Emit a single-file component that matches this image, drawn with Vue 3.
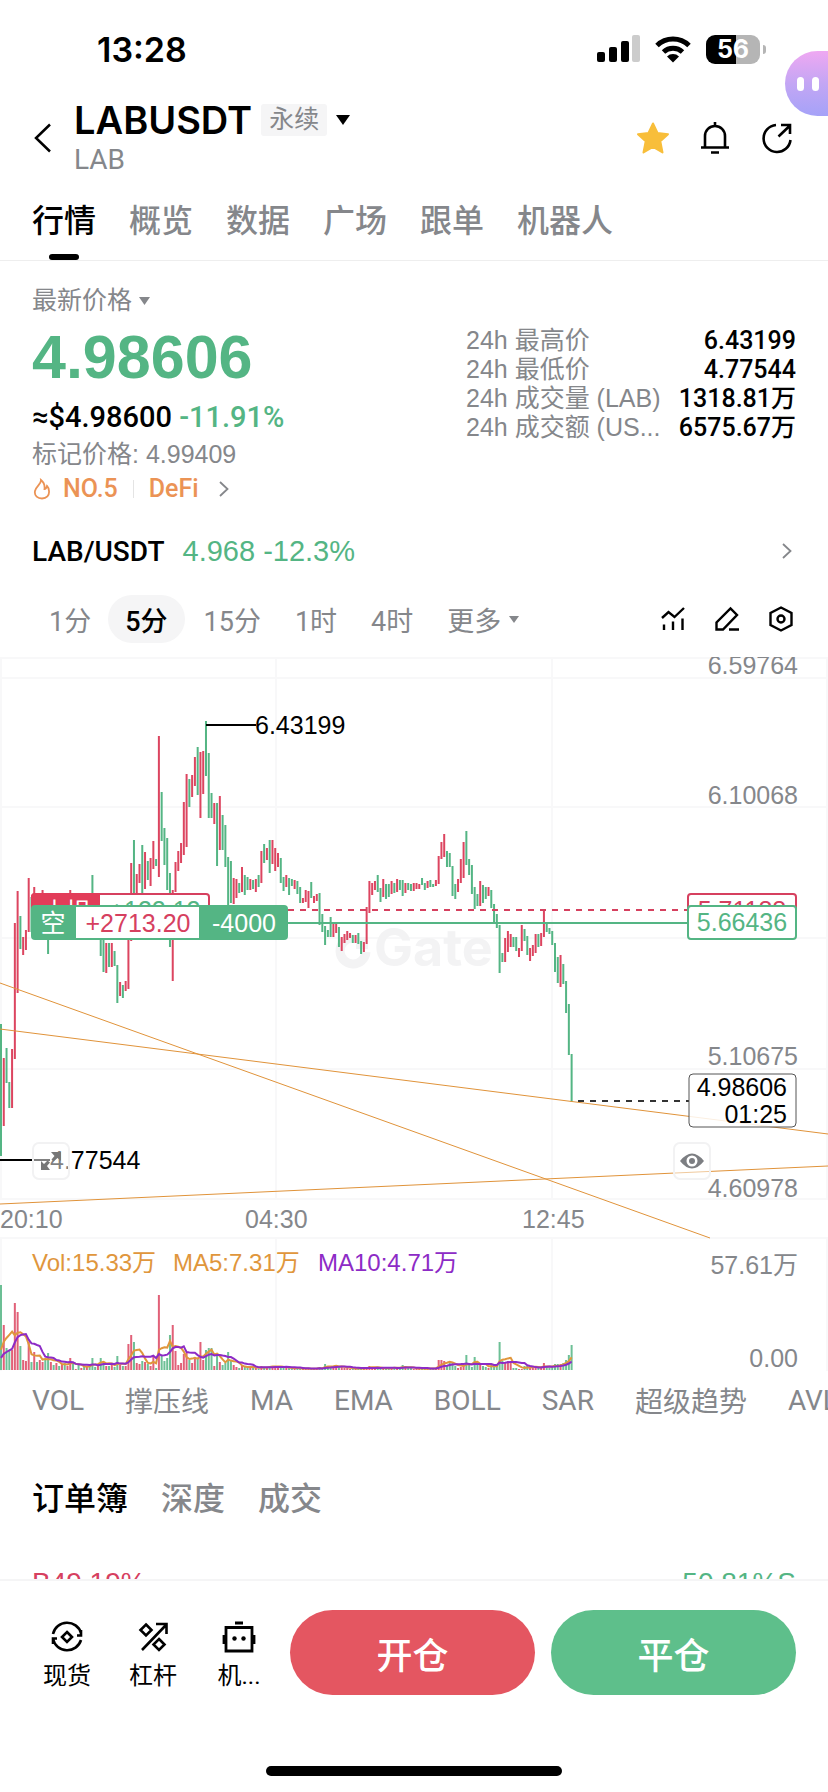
<template>
  <div class="app">
    <!-- 状态栏 -->
    <div class="status-bar">
      <span class="clock">13:28</span>
      <div class="status-icons">
        <svg width="43" height="28" viewBox="0 0 43 28">
          <rect x="0" y="17" width="8" height="10" rx="2" />
          <rect x="12" y="12" width="8" height="15" rx="2" />
          <rect x="24" y="6" width="8" height="21" rx="2" />
          <rect x="35" y="0" width="8" height="27" rx="2" fill="#ccc" />
        </svg>
        <svg width="38" height="28" viewBox="0 0 38 28">
          <path d="M3 10.5 A23 23 0 0 1 35 10.5" fill="none" stroke="#000" stroke-width="5" />
          <path d="M9.5 17 A14 14 0 0 1 28.5 17" fill="none" stroke="#000" stroke-width="5" />
          <path d="M19 27.5 L13 21.5 A8.5 8.5 0 0 1 25 21.5 Z" />
        </svg>
        <span class="battery">56</span>
      </div>
    </div>
    <button class="assistant" aria-label="助手"><i></i><i></i></button>

    <!-- 顶部标题 -->
    <header class="header">
      <button class="back" aria-label="返回">
        <svg width="18" height="30" viewBox="0 0 18 30"><path d="M16 1.5 L2 15 L16 28.5" fill="none" stroke="#000" stroke-width="2.5" /></svg>
      </button>
      <div class="symbol">
        <div class="symbol-line">
          <h1>LABUSDT</h1>
          <span class="badge">永续</span>
          <svg width="14" height="10" viewBox="0 0 14 10"><path d="M0 0 H14 L7 10 Z" /></svg>
        </div>
        <div class="base">LAB</div>
      </div>
      <div class="header-actions">
        <button aria-label="收藏">
          <svg width="34" height="34" viewBox="0 0 34 34"><path fill="#f8be3a" stroke="#f8be3a" stroke-width="2" stroke-linejoin="round" d="M17 2.5 L21.5 12 L32 13.2 L24.3 20.3 L26.5 31.5 L17 26 L7.5 31.5 L9.7 20.3 L2 13.2 L12.5 12 Z" /></svg>
        </button>
        <button aria-label="提醒">
          <svg width="34" height="34" viewBox="0 0 34 34" fill="none" stroke="#000" stroke-width="2.6"><path d="M7 26 V15 A10 10 0 0 1 27 15 V26 M3 26.5 H31 M17 5 V1 M13 31.5 H21" /></svg>
        </button>
        <button aria-label="分享">
          <svg width="34" height="34" viewBox="0 0 34 34" fill="none" stroke="#000" stroke-width="2.6"><path d="M16 4 A13.5 13.5 0 1 0 30.5 19 M18.5 15.5 L29.5 5 M21 4 H30 V13" /></svg>
        </button>
      </div>
    </header>

    <nav class="tabs">
      <a v-for="(tab, i) in tabs" :key="tab" href="#" :class="{ active: i === 0 }">{{ tab }}</a>
    </nav>

    <main class="content">
      <!-- 价格 -->
      <section class="price">
        <div class="price-left">
          <div class="price-label">
            最新价格
            <svg width="11" height="8" viewBox="0 0 11 8"><path fill="#85878b" d="M0 0 H11 L5.5 8 Z" /></svg>
          </div>
          <div class="last-price">4.98606</div>
          <div class="fiat">≈$4.98600 <span class="down">-11.91%</span></div>
          <div class="mark">标记价格: 4.99409</div>
          <div class="rank">
            <svg width="20" height="22" viewBox="0 0 20 22" fill="none" stroke="#eb9355" stroke-width="1.8"><path d="M9 2 C9.5 6 4 8 3 13 C2 18 6 20.5 10 20.5 C14.5 20.5 17.5 17.5 17 13 C16.8 10.5 16 9 15 8 C14.5 10 13.5 11 12.5 11 C13 7 11.5 4 9 2 Z" /></svg>
            <span>NO.5</span>
            <i class="divider"></i>
            <span>DeFi</span>
            <svg class="rank-arrow" width="10" height="16" viewBox="0 0 10 16"><path d="M1 1 L8.5 8 L1 15" fill="none" stroke="#85878b" stroke-width="1.8" /></svg>
          </div>
        </div>
        <dl class="stats">
          <div v-for="s in stats" :key="s.label">
            <dt>{{ s.label }}</dt>
            <dd>{{ s.value }}</dd>
          </div>
        </dl>
      </section>

      <a href="#" class="spot">
        <span class="spot-name">LAB/USDT</span>
        <span class="down">4.968 -12.3%</span>
        <svg width="10" height="16" viewBox="0 0 10 16"><path d="M1 1 L8.5 8 L1 15" fill="none" stroke="#85878b" stroke-width="1.8" /></svg>
      </a>

      <!-- 周期 -->
      <div class="intervals">
        <button v-for="(t, i) in intervals" :key="t" :class="{ active: i === 1 }">{{ t }}</button>
        <button class="more">
          更多
          <svg width="10" height="7" viewBox="0 0 10 7"><path fill="#85878b" d="M0 0 H10 L5 7 Z" /></svg>
        </button>
        <div class="tools">
          <button aria-label="指标">
            <svg width="26" height="26" viewBox="0 0 26 26" fill="none" stroke="#000" stroke-width="2.4"><path d="M2 12 L8.5 6 L14.5 11 L24 2 M4 18.5 V24 M13 15.5 V24 M22.5 12.5 V24" /></svg>
          </button>
          <button aria-label="画线">
            <svg width="26" height="26" viewBox="0 0 26 26" fill="none" stroke="#000" stroke-width="2.4"><path d="M2.5 23.5 V16.5 L16.5 2.5 L23 9 L9 23.5 Z M15 23.5 H25" /></svg>
          </button>
          <button aria-label="设置">
            <svg width="26" height="26" viewBox="0 0 26 26" fill="none" stroke="#000" stroke-width="2.4"><path d="M13 1.5 L23.5 7 V19 L13 24.5 L2.5 19 V7 Z" /><circle cx="13" cy="13" r="3.5" /></svg>
          </button>
        </div>
      </div>

      <!-- K线图 -->
      <div class="chart">
        <svg viewBox="0 0 828 714">
          <g stroke="#f8f8f9" stroke-width="2">
            <path d="M0 1 H828 M0 21 H828 M0 150 H828 M0 281 H828 M0 412 H828 M0 542 H828 M0 581 H828" />
            <path d="M1 0 V542 M276 0 V542 M552 0 V542 M827 0 V542 M1 581 V714 M276 581 V714 M552 581 V714 M827 581 V714" />
          </g>

          <!-- 水印 -->
          <path d="M352 281 A13 13 0 1 0 366 295" fill="none" stroke="#f3f3f4" stroke-width="9" />
          <rect x="356" y="280" width="12" height="12" fill="#f3f3f4" />
          <text x="374" y="309" class="watermark">Gate</text>

          <rect
            v-for="(c, i) in candles" :key="'c' + i"
            :x="barX(i) - 1" :y="c.top" width="2" :height="c.bottom - c.top" :fill="c.color"
          />

          <g class="axis" text-anchor="end">
            <text x="798" y="17">6.59764</text>
            <text x="798" y="147">6.10068</text>
            <text x="798" y="408">5.10675</text>
            <text x="798" y="540">4.60978</text>
            <text x="798" y="617">57.61万</text>
            <text x="798" y="710">0.00</text>
          </g>
          <g class="axis">
            <text x="0" y="571">20:10</text>
            <text x="245" y="571">04:30</text>
            <text x="522" y="571">12:45</text>
          </g>

          <g fill="none" stroke="#e0933a" stroke-width="1">
            <path d="M0 326 L710 581" />
            <path d="M0 372 L828 477" />
            <path d="M0 547 L828 509" />
          </g>

          <path d="M206 68 H256 M0 503 H50" stroke="#000" stroke-width="2" />
          <text x="255" y="77" class="extreme">6.43199</text>
          <text x="50" y="512" class="extreme">4.77544</text>

          <path d="M288 253 H688" stroke="#d6405f" stroke-width="2" stroke-dasharray="6 6" />
          <path d="M288 266 H688" stroke="#54b584" stroke-width="2" />
          <path d="M578 444 H689" stroke="#333" stroke-width="2" stroke-dasharray="6 6" />

          <!-- 止损 -->
          <rect x="32" y="237" width="177" height="34" rx="3" fill="#fff" stroke="#d6405f" stroke-width="2" />
          <path d="M31 240 a4 4 0 0 1 4 -4 H100 V271 H31 Z" fill="#e23c59" />
          <text x="66" y="264" fill="#fff" text-anchor="middle">止损</text>
          <text x="155" y="262" fill="#54b584" text-anchor="middle">+122.12</text>
          <rect x="688" y="237" width="108" height="34" rx="3" fill="#fff" stroke="#d6405f" stroke-width="2" />
          <text x="742" y="262" fill="#d6405f" text-anchor="middle">5.71188</text>

          <!-- 持仓 -->
          <rect x="31" y="248" width="257" height="35" rx="4" fill="#54b584" />
          <rect x="76" y="250" width="123" height="31" fill="#fff" />
          <text x="53" y="275" fill="#fff" text-anchor="middle">空</text>
          <text x="138" y="275" fill="#d6405f" text-anchor="middle">+2713.20</text>
          <text x="244" y="275" fill="#fff" text-anchor="middle">-4000</text>
          <rect x="688" y="249" width="108" height="33" rx="3" fill="#fff" stroke="#54b584" stroke-width="2" />
          <text x="742" y="274" fill="#54b584" text-anchor="middle">5.66436</text>

          <rect x="689" y="417" width="107" height="53" rx="4" fill="#fff" fill-opacity="0.85" stroke="#555" />
          <text x="787" y="439" text-anchor="end">4.98606</text>
          <text x="787" y="466" text-anchor="end">01:25</text>

          <!-- 成交量 -->
          <g class="legend">
            <text x="32" y="614" fill="#e0963c">Vol:15.33万</text>
            <text x="173" y="614" fill="#e0963c">MA5:7.31万</text>
            <text x="318" y="614" fill="#8d2bc6">MA10:4.71万</text>
          </g>
          <rect
            v-for="(v, i) in volumes" :key="'v' + i"
            :x="barX(i) - 1" :y="713 - v" width="2" :height="v" :fill="candles[i].color" fill-opacity="0.85"
          />
          <polyline :points="maLine(5)" fill="none" stroke="#e0963c" stroke-width="2" />
          <polyline :points="maLine(10)" fill="none" stroke="#8d2bc6" stroke-width="2" />
        </svg>

        <button class="chart-btn expand" aria-label="全屏">
          <svg width="20" height="18" viewBox="0 0 20 18"><path fill="#777" d="M10 0 H20 V9 L16.5 6 L12.5 9.5 L10.5 7.5 L13.5 4 Z M9 18 H0 V9 L3 12 L6.5 8.5 L9 10.5 L6 14 Z" /></svg>
        </button>
        <button class="chart-btn eye" aria-label="显示">
          <svg width="24" height="18" viewBox="0 0 24 18"><path fill="#7c7e82" fill-rule="evenodd" d="M0 9 Q12 -6 24 9 Q12 24 0 9 Z M12 3.5 A5.5 5.5 0 1 0 12 14.5 A5.5 5.5 0 1 0 12 3.5 Z" /><circle cx="12" cy="9" r="3" fill="#7c7e82" /></svg>
        </button>
      </div>

      <div class="indicators">
        <button v-for="n in indicators" :key="n">{{ n }}</button>
      </div>

      <div class="book-tabs">
        <button class="active">订单簿</button>
        <button>深度</button>
        <button>成交</button>
      </div>
      <div class="ratio">
        <span class="up">B49.19%</span>
        <span class="down">50.81%S</span>
      </div>
    </main>

    <!-- 底部操作栏 -->
    <footer class="footer">
      <div class="actions">
        <a href="#" class="action">
          <svg width="34" height="34" viewBox="0 0 34 34" fill="none" stroke="#000" stroke-width="2.6"><path d="M3 14 A14.5 14.5 0 0 1 31 13 M31 20 A14.5 14.5 0 0 1 3 19 M3 24 V18.5 H7 M31 10 V15.5 H27 M17 12 L22 17 L17 22 L12 17 Z" /></svg>
          <span>现货</span>
        </a>
        <a href="#" class="action">
          <svg width="34" height="34" viewBox="0 0 34 34" fill="none" stroke="#000" stroke-width="2.6"><path d="M6 30 L30 5 M20 4 H30.5 V14 M10 4.500 L15.500 10 L10 15.500 L4.500 10 Z M23 19 L28.500 24.500 L23 30 L17.500 24.500 Z" /></svg>
          <span>杠杆</span>
        </a>
        <a href="#" class="action">
          <svg width="34" height="34" viewBox="0 0 34 34" fill="none" stroke="#000" stroke-width="2.8"><path d="M4 7.5 H30 V31 H4 Z M13 3 H21 M2 15 V24 M32 15 V24" /><circle cx="12.5" cy="18.5" r="2.2" fill="#000" stroke="none" /><circle cx="21.5" cy="18.5" r="2.2" fill="#000" stroke="none" /></svg>
          <span>机...</span>
        </a>
        <button class="trade open">开仓</button>
        <button class="trade close">平仓</button>
      </div>
      <div class="home-indicator"></div>
    </footer>
  </div>
</template>

<script setup>
const tabs = ['行情', '概览', '数据', '广场', '跟单', '机器人'];
const intervals = ['1分', '5分', '15分', '1时', '4时'];
const indicators = ['VOL', '撑压线', 'MA', 'EMA', 'BOLL', 'SAR', '超级趋势', 'AVL'];
const stats = [
  { label: '24h 最高价', value: '6.43199' },
  { label: '24h 最低价', value: '4.77544' },
  { label: '24h 成交量 (LAB)', value: '1318.81万' },
  { label: '24h 成交额 (US...', value: '6575.67万' }
];

// r = 涨, g = 跌，后面是最高/最低的 y 坐标
const candles = `
g367-499 r401-469 g391-426 g425-451 r392-451 r266-402 r234-336 g259-292 r280-298 r273-293
r221-275 g240-275 r230-274 g240-276 r240-280 r233-274 g240-274 g246-297 r242-278 g245-280
r242-276 g240-278 r240-275 g243-279 r241-277 r233-275 g244-276 r245-275 g243-278 r244-274
g240-276 r243-279 g242-276 g218-270 g246-278 r250-280 g252-299 g274-315 r286-316 g286-310
r286-310 g294-309 g308-346 r325-339 g328-341 r324-334 r240-332 r206-284 g183-239 r217-237
r207-226 g188-236 r195-232 g204-223 r201-229 r184-212 g202-209 r79-220 g135-184 g171-208
g181-233 g216-290 r233-324 r205-235 r194-214 r186-206 r145-198 r117-190 g122-150 r118-140
r100-129 g90-138 r95-161 r94-137 g64-119 g96-161 g136-161 r146-167 g146-209 r139-193
g158-193 g168-210 g200-254 g204-246 r221-247 r222-241 g226-236 r210-235 g218-238 g220-233
r222-233 g223-232 r222-235 g218-230 r194-226 g187-206 r191-203 g183-216 r183-207 r191-214
r196-210 g201-226 g220-234 r218-230 g221-238 g222-229 r223-232 g224-237 g230-246 r241-246
r233-245 r234-251 g225-241 r239-246 r237-244 g236-268 g257-275 g269-288 g273-280 g260-280
r266-280 r267-276 g270-290 r280-294 r277-286 r274-283 r276-281 g278-286 r278-286 g276-287
g284-297 r285-295 r250-287 r224-256 r226-238 r224-233 g218-235 g231-245 r222-240 g227-242
g227-240 r224-237 g226-236 r222-235 g223-233 g223-239 r226-236 g226-233 g227-234 r226-234
r226-232 r227-232 g221-228 g226-233 r224-231 g223-230 g227-230 r223-229 r199-227 r185-202
r177-200 g194-210 g196-210 g209-239 g227-242 r222-235 r202-226 r185-221 g174-208 g202-218
g208-237 g230-252 g237-249 r224-249 g228-246 g230-242 r230-239 g233-251 g247-267 g257-271
g268-316 g296-305 r281-305 r274-295 r277-290 g280-290 g280-294 r291-300 r268-294 g272-284
g279-298 r291-304 r288-299 r277-296 g277-290 r276-289 r253-280 g266-275 g271-277 g274-288
g286-315 g300-326 r298-330 g307-327 g324-356 g347-398 g397-445`
  .trim()
  .split(/\s+/)
  .map((s) => {
    const [top, bottom] = s.slice(1).split('-').map(Number);
    return { color: s[0] === 'r' ? '#dc4560' : '#54b584', top, bottom };
  });

const volumes = [
  85, 45, 22, 20, 20, 67, 58, 24, 10, 9, 28, 8, 18, 8, 10, 8, 11, 17, 8, 5,
  7, 4, 6, 7, 4, 12, 7, 1, 5, 2, 4, 4, 4, 12, 3, 6, 12, 8, 4, 4,
  5, 3, 14, 5, 4, 4, 26, 35, 28, 7, 6, 9, 8, 6, 4, 14, 2, 75, 14, 9,
  12, 35, 45, 19, 5, 7, 16, 17, 10, 7, 11, 12, 28, 10, 20, 22, 22, 4, 14, 8,
  5, 7, 18, 9, 5, 3, 2, 4, 3, 3, 3, 2, 2, 1, 4, 3, 3, 4, 3, 4,
  4, 3, 2, 2, 2, 1, 3, 2, 1, 1, 1, 2, 1, 1, 2, 3, 2, 6, 4, 3,
  4, 4, 3, 3, 2, 2, 1, 2, 1, 1, 2, 2, 3, 4, 3, 2, 2, 1, 2, 2,
  2, 2, 3, 2, 2, 5, 3, 2, 2, 1, 1, 2, 1, 1, 1, 2, 2, 2, 10, 10,
  9, 5, 7, 7, 4, 2, 3, 4, 15, 5, 3, 13, 5, 5, 4, 3, 2, 5, 5, 4,
  28, 9, 8, 9, 7, 2, 2, 1, 1, 4, 4, 3, 3, 2, 3, 3, 7, 3, 2, 3,
  6, 6, 6, 7, 10, 15, 25
];

const barX = (i) => 1 + i * 2.77;

// 均线，起点之前的成交量按 4 补齐
const maLine = (n) =>
  volumes
    .map((_, i) => {
      let sum = 0;
      for (let k = i - n + 1; k <= i; k++) sum += k < 0 ? 4 : volumes[k];
      return `${barX(i).toFixed(1)},${(713 - sum / n).toFixed(1)}`;
    })
    .join(' ');
</script>

<style>
body { margin: 0; background: #fff; }
</style>

<style scoped>
.app {
  position: relative;
  display: flex; flex-direction: column;
  height: 100vh;
  overflow: hidden;
  color: #000;
  background: #fff;
  font-family: Roboto, "Noto Sans CJK SC", sans-serif;
}
button { padding: 0; border: none; background: none; font: inherit; color: inherit; cursor: pointer; }
a { color: inherit; text-decoration: none; }
svg { display: block; flex-shrink: 0; }
.up   { color: #d6405f; }
.down { color: #54b584; }

/* ───────── 状态栏 ───────── */
.status-bar {
  display: flex; justify-content: space-between; align-items: center;
  height: 98px;
  padding: 0 62px 0 97px;
  box-sizing: border-box;
}
.clock { font: 600 34px Inter, sans-serif; }
.status-icons { display: flex; align-items: center; gap: 14px; }
.battery {
  position: relative;
  width: 54px; height: 29px;
  margin-right: 6px;
  border-radius: 9px;
  background: linear-gradient(90deg, #000 56%, #b5b5b5 56%);
  color: #fff;
  font: 700 25px/29px Inter, sans-serif;
  text-align: center;
}
.battery::after {
  content: "";
  position: absolute; right: -6px; top: 10px;
  width: 3px; height: 9px;
  border-radius: 0 3px 3px 0;
  background: #b5b5b5;
}
.assistant {
  position: absolute; right: 0; top: 51px;
  display: flex; align-items: center; gap: 8px;
  width: 43px; height: 65px;
  padding-left: 12px;
  border-radius: 33px 0 0 33px;
  background: linear-gradient(#efa8f2, #c3a6f4 50%, #a5a2f8);
}
.assistant i { width: 7px; height: 14px; border-radius: 4px; background: #fff; }

/* ───────── 标题 ───────── */
.header { display: flex; align-items: center; padding: 0 34px; }
.back { width: 40px; }
.symbol { flex: 1; }
.symbol-line { display: flex; align-items: center; height: 44px; }
h1 { margin: 0 9px 0 0; font: 600 38px Inter, sans-serif; }
.badge {
  margin-right: 9px; padding: 0 8px;
  border-radius: 3px;
  background: #f5f5f6;
  color: #85878b;
  font-size: 25px; line-height: 32px;
}
.base { color: #85878b; font-size: 28px; line-height: 36px; }
.header-actions { display: flex; gap: 28px; }

.tabs {
  display: flex; gap: 33px;
  padding: 4px 32px 0;
  border-bottom: 1px solid #eee;
  color: #85878b;
  font-size: 32px; font-weight: 500; line-height: 78px;
}
.tabs a { position: relative; white-space: nowrap; }
.tabs .active { color: #000; }
.tabs .active::after {
  content: "";
  position: absolute; left: 17px; right: 17px; bottom: 0;
  height: 6px;
  border-radius: 3px;
  background: #000;
}

/* ───────── 价格 ───────── */
.content { flex: 1; min-height: 0; overflow-y: auto; scrollbar-width: none; }
.price { display: flex; justify-content: space-between; padding: 24px 32px 0; }
.price-label {
  display: flex; align-items: center; gap: 7px;
  color: #85878b;
  font-size: 25px; line-height: 32px;
}
.last-price {
  color: #54b584;
  font: 700 61px/80px "Liberation Sans", sans-serif;
}
.fiat { font-size: 29px; font-weight: 500; line-height: 40px; }
.mark {
  color: #85878b;
  font: 25px/34px "Liberation Sans", "Noto Sans CJK SC", sans-serif;
}
.rank {
  display: flex; align-items: center;
  color: #eb9355;
  font-size: 25px; font-weight: 500; line-height: 36px;
}
.rank svg { margin-right: 11px; }
.divider { width: 1px; height: 18px; margin: 0 15px; background: #e4e4e4; }
.rank .rank-arrow { margin: 0 0 0 20px; }
.stats { width: 330px; margin: 41px 0 0; font-size: 25px; line-height: 29px; }
.stats div { display: flex; justify-content: space-between; }
dt { color: #85878b; font-family: "Liberation Sans", "Noto Sans CJK SC", sans-serif; white-space: nowrap; }
dd { margin: 0; font-weight: 500; white-space: nowrap; }

.spot {
  display: flex; align-items: center; gap: 18px;
  height: 88px;
  padding: 0 36px 0 32px;
  font-size: 28px;
}
.spot-name { font-weight: 500; }
.spot .down { font-family: "Liberation Sans", sans-serif; font-size: 29px; }
.spot svg { margin-left: auto; }

/* ───────── 周期 ───────── */
.intervals {
  display: flex; align-items: center;
  padding: 0 34px 14px 32px;
  color: #85878b;
  font-size: 27px;
}
.intervals > button { height: 48px; padding: 0 17px; white-space: nowrap; }
.intervals > .active { margin-right: 2px; border-radius: 24px; background: #f5f5f6; color: #000; font-weight: 500; }
.intervals > .more { display: flex; align-items: center; gap: 8px; }
.tools { display: flex; gap: 28px; margin-left: auto; }

/* ───────── 图表 ───────── */
.chart { position: relative; }
.chart > svg { width: 100%; }
.chart text { font-family: "Liberation Sans", "Noto Sans CJK SC", sans-serif; font-size: 25px; }
.chart .axis text { fill: #85878b; }
.chart .legend text { font-size: 24px; }
.chart .extreme { font-family: "Liberation Sans", sans-serif; }
.chart .watermark { font: 700 52px Inter, sans-serif; fill: #f3f3f4; }
.chart-btn {
  position: absolute; bottom: 191px;
  display: flex; justify-content: center; align-items: center;
  width: 38px; height: 38px;
  border: 2px solid #f2f2f3;
  border-radius: 7px;
  background: rgba(255, 255, 255, .5);
}
.expand { left: 32px; }
.eye { right: 117px; }

.indicators {
  display: flex; align-items: center; gap: 41px;
  height: 58px;
  padding: 0 32px;
  overflow: hidden;
  color: #85878b;
  font-size: 28px;
}
.indicators button { flex-shrink: 0; white-space: nowrap; }

/* ───────── 订单簿 ───────── */
.book-tabs {
  display: flex; gap: 33px;
  height: 68px;
  margin: 33px 32px;
  color: #85878b;
  font-size: 32px; font-weight: 500;
}
.book-tabs .active { color: #000; }
.ratio {
  display: flex; justify-content: space-between;
  padding: 0 32px;
  font: 28px/40px "Liberation Sans", sans-serif;
}

/* ───────── 底部 ───────── */
.footer { padding-bottom: 16px; border-top: 2px solid #f5f5f6; background: #fff; }
.actions { display: flex; align-items: center; gap: 16px; padding: 29px 32px 0; }
.action {
  display: flex; flex-direction: column; align-items: center; gap: 4px;
  width: 70px;
  padding-top: 8px;
  font-size: 24px; line-height: 36px;
}
.trade {
  flex: 1;
  height: 85px;
  border-radius: 43px;
  color: #fff;
  font-size: 36px; font-weight: 500;
}
.open  { background: #e45661; }
.close { background: #5ebf8b; }
.home-indicator { width: 296px; height: 10px; margin: 71px auto 0; border-radius: 5px; background: #000; }
</style>
